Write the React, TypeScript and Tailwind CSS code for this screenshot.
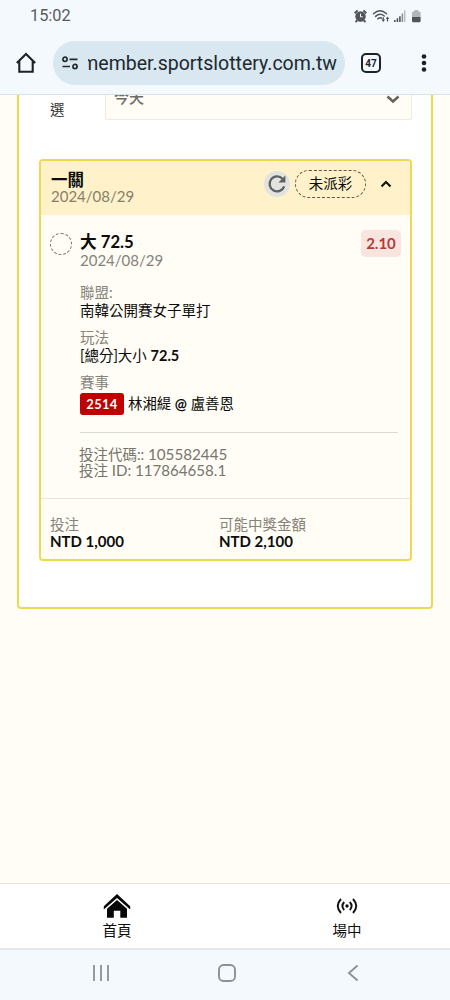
import React from 'react';

interface DetailProps {
  label: string;
  className?: string;
  children: React.ReactNode;
}

const Detail = ({ label, className = '', children }: DetailProps) => (
  <div className={className}>
    <div className="h-[18px] leading-[18px] text-[#85837a]">{label}</div>
    <div className="h-[18px] leading-[18px]">{children}</div>
  </div>
);

const StatusIcons = () => (
  <svg width="70" height="16" viewBox="0 0 70 16" className="text-[#515458]" aria-hidden>
    {/* alarm */}
    <circle cx="7.5" cy="8.5" r="5.2" fill="currentColor" />
    <path d="M1.700 5.200 4.600 2.400M13.300 5.200l-2.900-2.800M4 12.400l-1.400 1.700M11 12.400l1.400 1.700" stroke="currentColor" strokeWidth="2" />
    <path d="M7.500 5.600v3.200h2.200" fill="none" stroke="#f4f9fd" strokeWidth="1" />
    {/* wifi */}
    <g fill="none" stroke="currentColor" strokeWidth="1.5" strokeLinecap="round">
      <path d="M20.500 5.800Q27 -.200 33.500 5.800" />
      <path d="M22.600 8.400Q27 4.400 31.200 8" />
      <path d="M24.800 10.800Q27 9 28.600 10.200" />
    </g>
    <path d="M28.500 11.500h1.200V9.300h1.200v2.200h1.200l-1.800 2.500zM32.700 11h1.200v2.400h1.200V11h1.200l-1.800-2.500z" fill="currentColor" />
    {/* signal */}
    <path d="M41 12h1.600v2H41zM43.600 10.300h1.600V14h-1.600zM46.100 8.200h1.600V14h-1.600z" fill="currentColor" />
    <path d="M48.600 5.500h1.600V14h-1.600z" fill="#8f9295" />
    <path d="M51 2.300h1.400V14H51z" fill="#b9bdc0" />
    {/* battery */}
    <path d="M59 5a1.400 1.400 0 0 1 1.400-1.400h1V2h3.800v1.600h1A1.400 1.400 0 0 1 67.600 5v4.500H59z" fill="#b3b6b9" />
    <path d="M59 9h8.600v4a1.300 1.300 0 0 1-1.300 1.300h-6A1.300 1.300 0 0 1 59 13z" fill="currentColor" />
  </svg>
);

const BrowserBar = () => (
  <header className="h-[95px] shrink-0 border-b border-[#d9e2e7] bg-[#f4f9fd] font-[Roboto,sans-serif]">
    <div className="flex h-8 items-center justify-between pl-[30px] pr-[27px] text-[#56595d]">
      <span className="mt-[1px] text-[16.300px]">15:02</span>
      <StatusIcons />
    </div>
    <div className="flex h-[62px] items-center">
      <svg width="22" height="24" viewBox="0 0 22 24" className="ml-[15px] text-[#1d2226]" aria-hidden>
        <path d="M1.800 12 11 3l9.200 9M4.300 10v10.800h13.400V10" fill="none" stroke="currentColor" strokeWidth="2.100" />
      </svg>
      <div className="ml-[16px] flex h-[44px] w-[292px] items-center rounded-full bg-[#d8e7f0] pl-[9px] pr-[8px]">
        <svg width="17" height="14" viewBox="0 0 17 14" className="shrink-0 text-[#23292e]" aria-hidden>
          <g fill="none" stroke="currentColor" strokeWidth="1.700">
            <circle cx="3" cy="3.300" r="2.100" />
            <path d="M7.500 3.300h8M0.500 10.500h7.500" />
            <circle cx="13" cy="10.500" r="2.100" />
          </g>
        </svg>
        <div className="ml-[9px] flex flex-1 justify-end overflow-hidden whitespace-nowrap pt-[2px] text-[19.500px] text-[#20292f]">
          member.sportslottery.com.tw
        </div>
      </div>
      <div className="ml-[16px] flex h-5 w-5 items-center justify-center rounded-[5px] border-2 border-[#1d2226] text-[10px] font-bold text-[#1d2226]">
        47
      </div>
      <svg width="6" height="20" viewBox="0 0 6 20" className="ml-[40px]" fill="#1d2226" aria-hidden>
        <circle cx="3" cy="3.500" r="2.300" />
        <circle cx="3" cy="10" r="2.300" />
        <circle cx="3" cy="16.500" r="2.300" />
      </svg>
    </div>
  </header>
);

const BetCard = () => (
  <section className="mt-[39px] h-[402px] w-[373px] overflow-hidden rounded-[4px] border-2 border-[#efd94f] bg-[#fffdf5]">
    <div className="flex h-[54px] bg-[#fff1ca] pl-[10px]">
      <div className="flex-1 pt-[11px]">
        <div className="text-[16.500px] font-bold leading-4">一關</div>
        <div className="text-[15px] leading-4 text-[#858069]">2024/08/29</div>
      </div>
      <div className="flex h-[46px] items-center pr-[18px]">
        <span className="flex h-[26px] w-[26px] items-center justify-center rounded-full bg-[#e2e3df]">
          <svg width="20" height="20" viewBox="0 0 20 20" aria-hidden>
            <path d="M17.200 12.300A7.500 7.500 0 1 1 15.500 4.700" fill="none" stroke="#5d6265" strokeWidth="2.300" />
            <path d="M18.400 1.600v7h-7z" fill="#5d6265" />
          </svg>
        </span>
        <span className="ml-[5px] flex h-[28px] w-[71px] items-center justify-center rounded-full border border-dashed border-[#5f584a] text-[14.500px]">
          未派彩
        </span>
        <svg width="12" height="8" viewBox="0 0 12 8" className="ml-[14px]" aria-hidden>
          <path d="m1.500 6.500 4.500-4.500 4.500 4.500" fill="none" stroke="#111" strokeWidth="2.100" />
        </svg>
      </div>
    </div>

    <div className="flex h-[283px] pl-[9px] pr-[9px]">
      <span className="mt-[18px] h-[22px] w-[22px] shrink-0 rounded-full border border-dashed border-[#777]" />
      <div className="ml-[8px] flex-1 pt-[17px]">
        <div className="flex">
          <div className="flex-1">
            <div className="text-[16.700px] font-bold leading-5">大 72.5</div>
            <div className="text-[15px] leading-4 text-[#85837a]">2024/08/29</div>
          </div>
          <span className="-mt-[2px] flex h-[27px] w-[40px] items-center justify-center rounded-[5px] bg-[#f9e5df] text-[15px] font-bold text-[#b53a38]">
            2.10
          </span>
        </div>
        <Detail label="聯盟:" className="mt-[16px]">南韓公開賽女子單打</Detail>
        <Detail label="玩法" className="mt-[9px]">
          [總分]大小 <b>72.5</b>
        </Detail>
        <Detail label="賽事" className="mt-[9px]">
          <div className="flex h-[23px] items-center">
            <span className="mr-[4px] flex h-[22px] w-[44px] items-center justify-center rounded-[3px] bg-[#c00000] text-[13px] font-bold tracking-[0.3px] text-white">
              2514
            </span>
            <span className="text-[14.400px]">林湘緹 <b>@</b> 盧善恩</span>
          </div>
        </Detail>
        <div className="mr-[3px] mt-[22px] h-px bg-[#dddad3]" />
        <div className="-ml-px mt-[13px] text-[#77756e]">
          <div className="h-4 leading-4">
            投注代碼:: <span className="text-[15.200px]">105582445</span>
          </div>
          <div className="h-4 leading-4">
            投注 <span className="text-[15.100px]">ID: 117864658.1</span>
          </div>
        </div>
      </div>
    </div>

    <div className="grid grid-cols-[169px_1fr] border-t border-[#e8e5de] pl-[9px] pt-[17px]">
      <div>
        <div className="leading-[17px] text-[#85837a]">投注</div>
        <div className="text-[15px] font-bold leading-[17px]">NTD 1,000</div>
      </div>
      <div>
        <div className="leading-[17px] text-[#85837a]">可能中獎金額</div>
        <div className="text-[15px] font-bold leading-[17px]">NTD 2,100</div>
      </div>
    </div>
  </section>
);

const BottomTabs = () => (
  <nav className="flex h-[65px] shrink-0 border-t border-[#e5e5e0] bg-white">
    <div className="flex w-[234px] flex-col items-center pt-[9px]">
      <svg width="28" height="26" viewBox="0 0 28 26" aria-hidden>
        <path d="M0.800 13.300 14 1l13.200 12.300v3.300L14 4.900.800 16.600z" fill="#080808" />
        <path d="M4 15.700 14 7l10 8.700v9h-6.700v-7h-6.500v7H4z" fill="#080808" />
      </svg>
      <span className="mt-[3px] leading-[18px]">首頁</span>
    </div>
    <div className="flex flex-1 flex-col items-center pl-[10px] pt-[12px]">
      <svg width="22" height="20" viewBox="0 0 22 20" fill="none" stroke="#111" strokeWidth="1.900" aria-hidden>
        <path d="M5 3Q-1.500 10 5 17M8.200 6q-3.600 4 0 8M13.800 6q3.600 4 0 8M17 3q6.500 7 0 14" />
        <circle cx="11" cy="10" r="1.700" fill="#111" stroke="none" />
      </svg>
      <span className="mt-[6px] leading-[18px]">場中</span>
    </div>
  </nav>
);

const SystemNav = () => (
  <footer className="flex h-[52px] shrink-0 items-center border-t-2 border-[#e4e8eb] bg-[#f4f9fd] pl-[92px] pb-[4px]">
    <svg width="18" height="18" viewBox="0 0 18 18" fill="none" stroke="#8d9195" strokeWidth="1.800" aria-hidden>
      <path d="M2 1v16M9 1v16M16 1v16" />
    </svg>
    <svg width="20" height="20" viewBox="0 0 20 20" className="ml-[107px]" fill="none" stroke="#8d9195" strokeWidth="1.900" aria-hidden>
      <rect x="2" y="2" width="16" height="16" rx="4.500" />
    </svg>
    <svg width="12" height="18" viewBox="0 0 12 18" className="ml-[110px]" fill="none" stroke="#8d9195" strokeWidth="1.900" aria-hidden>
      <path d="m10.500 1.500-8.500 7.500 8.500 7.500" />
    </svg>
  </footer>
);

const App = () => (
  <div className="flex h-[1000px] w-[450px] flex-col overflow-hidden bg-[#fffdf5] font-[Lato,'Noto_Sans_CJK_TC',sans-serif] text-[14.500px] text-[#0c0c0c]">
    <BrowserBar />
    <main className="flex-1 overflow-hidden pl-[17px]">
      <div className="h-[514px] w-[416px] rounded-b-[4px] border-2 border-t-0 border-[#efd94f] bg-white pl-[20px]">
        <div className="flex h-[25px]">
          <span className="w-[66px] pl-[11px] pt-[6px] leading-[18px] text-[#333]">選</span>
          <div className="flex h-[25px] w-[307px] justify-between overflow-hidden rounded-b-[3px] border border-t-0 border-[#eceae2] bg-[#fffdf6] pl-[8px] pr-[11px]">
            <span className="-mt-[7px] text-[15px] font-medium leading-[18px] text-[#6e6c66]">今天</span>
            <svg width="14" height="10" viewBox="0 0 14 10" aria-hidden>
              <path d="m1.500 1.500 5.500 5 5.500-5" fill="none" stroke="#66625a" strokeWidth="2.500" />
            </svg>
          </div>
        </div>
        <BetCard />
      </div>
    </main>
    <BottomTabs />
    <SystemNav />
  </div>
);

export default App;
